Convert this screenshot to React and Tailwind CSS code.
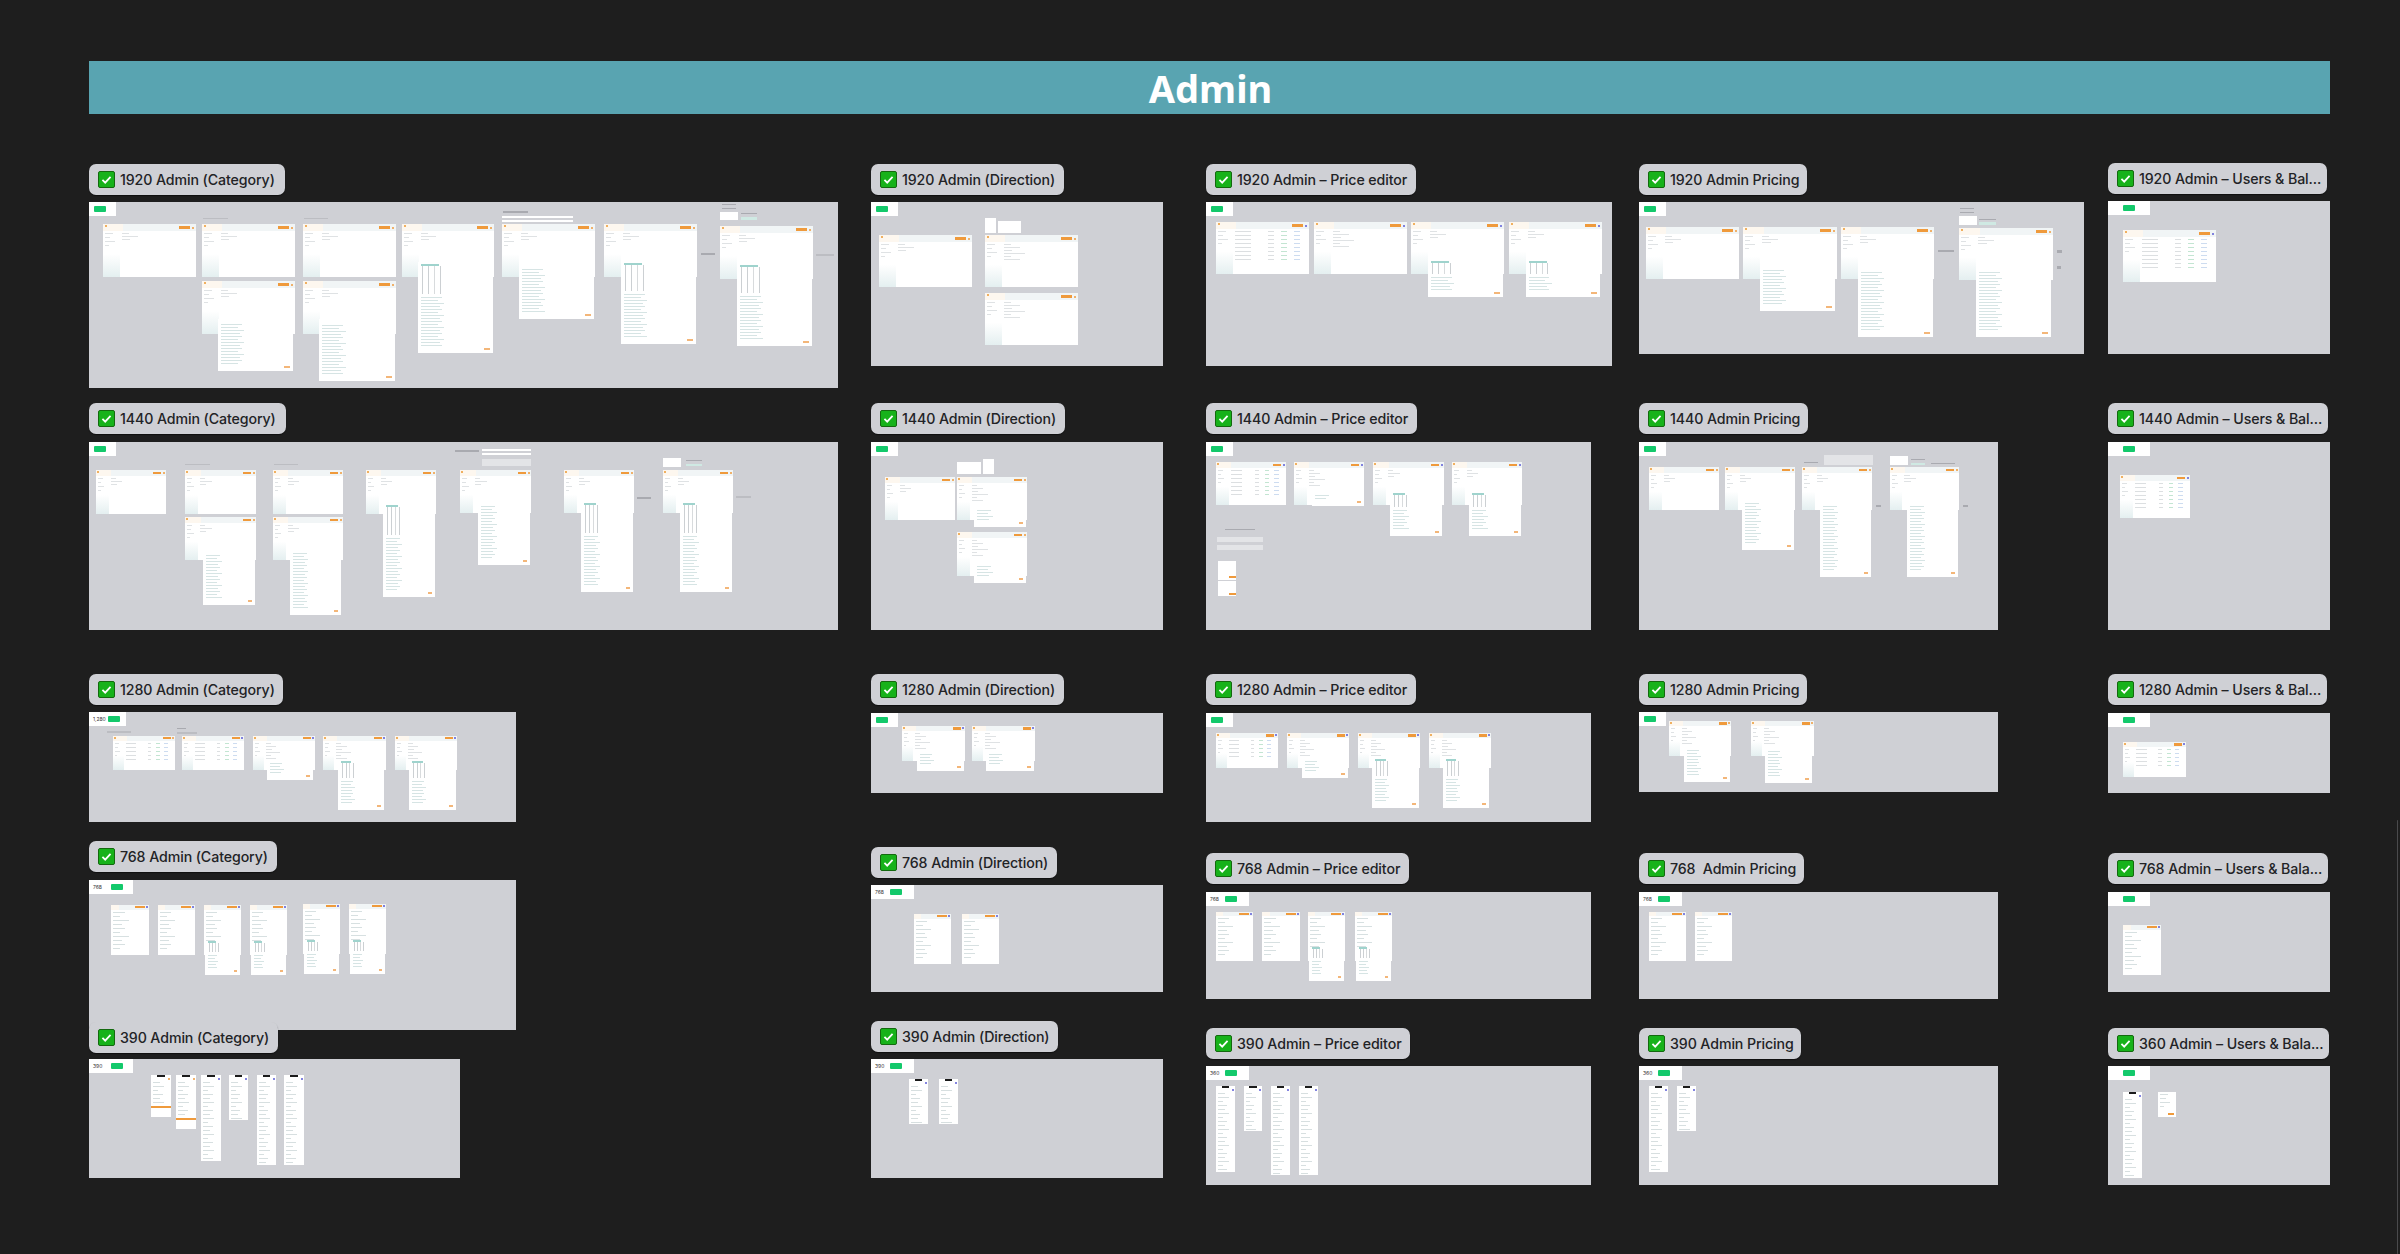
const DOT_BLUE = 'bg-[#5b5bd6]';
const DOT_ORANGE = 'bg-[#ef9a3c]';

// helper for a tall white continuation hanging below a desktop screen
const ext = (x, w, b, chart = false) => ({ x, w, b, chart });

const FRAMES = [
  // 1920 row
  {
    label: '1920 Admin (Category)', bx: 89, by: 164, bw: 196, x: 89, y: 202, w: 749, h: 186, tw: 27,
    screens: [
      { x: 103, y: 224, w: 93, h: 53 },
      { x: 202, y: 224, w: 93, h: 53 },
      { x: 202, y: 281, w: 93, h: 53, ext: ext(218, 75, 371) },
      { x: 303, y: 224, w: 93, h: 53 },
      { x: 303, y: 281, w: 93, h: 53, ext: ext(319, 76, 381) },
      { x: 402, y: 224, w: 92, h: 53, ext: ext(418, 75, 353, true) },
      { x: 502, y: 224, w: 93, h: 53, ext: ext(519, 75, 319) },
      { x: 604, y: 224, w: 93, h: 53, ext: ext(621, 75, 344, true) },
      { x: 720, y: 226, w: 93, h: 53, ext: ext(737, 75, 346, true) },
    ],
    notes: [
      [203, 218, 25, 1, 'gray'], [304, 218, 24, 1, 'gray'], [503, 211, 25, 2, 'dark'],
      [502, 216, 71, 2, 'white'], [502, 220, 71, 2, 'white'], [722, 204, 14, 1, 'dark'], [722, 208, 14, 1, 'dark'],
      [720, 212, 18, 8, 'white'], [741, 213, 16, 1, 'dark'], [741, 217, 16, 3, 'teal'],
      [701, 253, 14, 2, 'dark'], [816, 254, 18, 2, 'gray'],
    ],
  },
  {
    label: '1920 Admin (Direction)', bx: 871, by: 164, bw: 193, x: 871, y: 202, w: 292, h: 164, tw: 27,
    screens: [
      { x: 879, y: 235, w: 93, h: 52 },
      { x: 985, y: 235, w: 93, h: 52, kind: 'form' },
      { x: 985, y: 293, w: 93, h: 52, kind: 'form' },
    ],
    notes: [[985, 218, 11, 15, 'white'], [998, 221, 23, 12, 'white']],
  },
  {
    label: '1920 Admin – Price editor', bx: 1206, by: 164, bw: 210, x: 1206, y: 202, w: 406, h: 164, tw: 27,
    screens: [
      { x: 1216, y: 222, w: 93, h: 52, kind: 'table', dot: DOT_BLUE },
      { x: 1314, y: 222, w: 93, h: 52, kind: 'form', dot: DOT_BLUE },
      { x: 1411, y: 222, w: 93, h: 52, dot: DOT_BLUE, ext: ext(1428, 75, 297, true) },
      { x: 1509, y: 222, w: 93, h: 52, dot: DOT_BLUE, ext: ext(1526, 74, 297, true) },
    ],
  },
  {
    label: '1920 Admin Pricing', bx: 1639, by: 164, bw: 168, x: 1639, y: 202, w: 445, h: 152, tw: 27,
    screens: [
      { x: 1646, y: 227, w: 93, h: 52 },
      { x: 1743, y: 227, w: 94, h: 52, ext: ext(1760, 75, 311) },
      { x: 1841, y: 227, w: 93, h: 52, ext: ext(1858, 75, 337) },
      { x: 1959, y: 228, w: 94, h: 52, ext: ext(1976, 75, 337) },
    ],
    notes: [
      [1960, 208, 14, 1, 'dark'], [1960, 212, 14, 1, 'dark'], [1959, 216, 18, 9, 'white'], [1979, 219, 17, 1, 'dark'],
      [1979, 222, 17, 3, 'teal'], [1938, 250, 16, 2, 'dark'], [2057, 250, 5, 3, 'dark'], [2057, 266, 4, 3, 'dark'],
    ],
  },
  {
    label: '1920 Admin – Users & Bal...', bx: 2108, by: 163, bw: 219, x: 2108, y: 201, w: 222, h: 153, tw: 42, chipX: 15,
    screens: [{ x: 2123, y: 230, w: 93, h: 52, kind: 'table', dot: DOT_BLUE }],
  },

  // 1440 row
  {
    label: '1440 Admin (Category)', bx: 89, by: 403, bw: 197, x: 89, y: 442, w: 749, h: 188, tw: 27,
    screens: [
      { x: 96, y: 470, w: 70, h: 44 },
      { x: 185, y: 470, w: 71, h: 44 },
      { x: 185, y: 517, w: 71, h: 43, ext: ext(203, 52, 605) },
      { x: 273, y: 470, w: 70, h: 44 },
      { x: 273, y: 517, w: 70, h: 43, ext: ext(290, 51, 615) },
      { x: 366, y: 470, w: 70, h: 44, ext: ext(383, 52, 597, true) },
      { x: 460, y: 470, w: 71, h: 43, ext: ext(478, 52, 565) },
      { x: 564, y: 470, w: 70, h: 43, ext: ext(581, 52, 592, true) },
      { x: 663, y: 470, w: 70, h: 43, ext: ext(680, 52, 592, true) },
    ],
    notes: [
      [185, 464, 25, 1, 'gray'], [274, 464, 24, 1, 'gray'], [455, 450, 24, 2, 'dark'], [482, 449, 49, 2, 'white'],
      [482, 453, 49, 2, 'white'], [482, 459, 49, 7, 'lite'], [663, 458, 18, 9, 'white'], [686, 460, 16, 1, 'dark'],
      [686, 464, 16, 2, 'teal'], [637, 497, 14, 2, 'dark'], [736, 496, 15, 2, 'gray'],
    ],
  },
  {
    label: '1440 Admin (Direction)', bx: 871, by: 403, bw: 194, x: 871, y: 442, w: 292, h: 188, tw: 27,
    screens: [
      { x: 885, y: 477, w: 70, h: 43 },
      { x: 957, y: 477, w: 70, h: 43, kind: 'form', ext: ext(974, 52, 527) },
      { x: 957, y: 532, w: 70, h: 44, kind: 'form', ext: ext(974, 52, 583) },
    ],
    notes: [[957, 462, 24, 12, 'white'], [983, 459, 11, 15, 'white']],
  },
  {
    label: '1440 Admin – Price editor', bx: 1206, by: 403, bw: 211, x: 1206, y: 442, w: 385, h: 188, tw: 27,
    screens: [
      { x: 1216, y: 462, w: 70, h: 43, kind: 'table', dot: DOT_BLUE },
      { x: 1294, y: 462, w: 70, h: 43, kind: 'form', dot: DOT_BLUE, ext: ext(1312, 52, 506) },
      { x: 1373, y: 462, w: 71, h: 43, dot: DOT_BLUE, ext: ext(1390, 52, 536, true) },
      { x: 1452, y: 462, w: 70, h: 43, dot: DOT_BLUE, ext: ext(1469, 52, 536, true) },
    ],
    notes: [
      [1225, 529, 30, 1, 'dark'], [1217, 537, 46, 5, 'lite'], [1217, 545, 46, 5, 'lite'],
      [1218, 561, 18, 19, 'white'], [1218, 581, 18, 15, 'white'], [1229, 576, 7, 2, 'orange'], [1229, 593, 7, 2, 'orange'],
    ],
  },
  {
    label: '1440 Admin Pricing', bx: 1639, by: 403, bw: 169, x: 1639, y: 442, w: 359, h: 188, tw: 27,
    screens: [
      { x: 1649, y: 467, w: 70, h: 43 },
      { x: 1725, y: 467, w: 70, h: 43, ext: ext(1742, 52, 550) },
      { x: 1802, y: 467, w: 70, h: 43, ext: ext(1820, 51, 577) },
      { x: 1890, y: 467, w: 69, h: 43, ext: ext(1907, 51, 577) },
    ],
    notes: [
      [1824, 455, 49, 10, 'lite'], [1804, 462, 14, 1, 'dark'], [1890, 456, 18, 9, 'white'], [1911, 459, 14, 1, 'dark'],
      [1911, 463, 14, 2, 'teal'], [1931, 463, 24, 1, 'dark'], [1876, 505, 5, 2, 'dark'], [1963, 505, 5, 2, 'dark'],
    ],
  },
  {
    label: '1440 Admin – Users & Bal...', bx: 2108, by: 403, bw: 220, x: 2108, y: 442, w: 222, h: 188, tw: 42, chipX: 15,
    screens: [{ x: 2120, y: 475, w: 70, h: 43, kind: 'table', dot: DOT_BLUE }],
  },

  // 1280 row
  {
    label: '1280 Admin (Category)', bx: 89, by: 674, bw: 194, x: 89, y: 712, w: 427, h: 110, tw: 37, num: '1,280', chipX: 19,
    screens: [
      { x: 113, y: 736, w: 62, h: 34, kind: 'table' },
      { x: 182, y: 736, w: 62, h: 34, kind: 'table', dot: DOT_BLUE },
      { x: 253, y: 736, w: 62, h: 34, kind: 'form', dot: DOT_BLUE, ext: ext(267, 46, 780) },
      { x: 323, y: 736, w: 63, h: 34, kind: 'form', dot: DOT_BLUE, ext: ext(338, 46, 810, true) },
      { x: 395, y: 736, w: 62, h: 34, kind: 'form', dot: DOT_BLUE, ext: ext(409, 47, 810, true) },
    ],
    notes: [[107, 731, 24, 2, 'gray'], [177, 728, 9, 1, 'dark'], [177, 732, 20, 2, 'gray']],
  },
  {
    label: '1280 Admin (Direction)', bx: 871, by: 674, bw: 193, x: 871, y: 713, w: 292, h: 80, tw: 27,
    screens: [
      { x: 902, y: 726, w: 63, h: 35, kind: 'form', dot: DOT_BLUE, ext: ext(917, 47, 771) },
      { x: 972, y: 726, w: 63, h: 35, kind: 'form', dot: DOT_BLUE, ext: ext(986, 48, 771) },
    ],
  },
  {
    label: '1280 Admin – Price editor', bx: 1206, by: 674, bw: 210, x: 1206, y: 713, w: 385, h: 109, tw: 27,
    screens: [
      { x: 1216, y: 733, w: 62, h: 35, kind: 'table', dot: DOT_BLUE },
      { x: 1287, y: 733, w: 62, h: 35, kind: 'form', dot: DOT_BLUE, ext: ext(1302, 46, 778) },
      { x: 1358, y: 733, w: 62, h: 35, kind: 'form', dot: DOT_BLUE, ext: ext(1372, 47, 808, true) },
      { x: 1429, y: 733, w: 62, h: 35, kind: 'form', dot: DOT_BLUE, ext: ext(1443, 46, 808, true) },
    ],
  },
  {
    label: '1280 Admin Pricing', bx: 1639, by: 674, bw: 168, x: 1639, y: 712, w: 359, h: 80, tw: 27,
    screens: [
      { x: 1669, y: 721, w: 62, h: 35, kind: 'form', ext: ext(1684, 46, 782) },
      { x: 1751, y: 721, w: 63, h: 35, kind: 'form', ext: ext(1765, 47, 783) },
    ],
  },
  {
    label: '1280 Admin – Users & Bal...', bx: 2108, by: 674, bw: 219, x: 2108, y: 713, w: 222, h: 80, tw: 42, chipX: 15,
    screens: [{ x: 2123, y: 742, w: 63, h: 35, kind: 'table', dot: DOT_BLUE }],
  },

  // 768 row
  {
    label: '768 Admin (Category)', bx: 89, by: 841, bw: 188, x: 89, y: 880, w: 427, h: 150, tw: 44, num: '768', chipX: 22,
    screens: [
      { x: 111, y: 905, w: 38, h: 50, kind: 'tablet' },
      { x: 158, y: 905, w: 37, h: 50, kind: 'tablet' },
      { x: 204, y: 905, w: 37, h: 50, kind: 'tablet', ext: ext(205, 35, 975, true) },
      { x: 250, y: 905, w: 37, h: 50, kind: 'tablet', ext: ext(251, 35, 975, true) },
      { x: 303, y: 904, w: 37, h: 50, kind: 'tablet', ext: ext(304, 35, 974, true) },
      { x: 349, y: 904, w: 37, h: 50, kind: 'tablet', ext: ext(350, 35, 974, true) },
    ],
  },
  {
    label: '768 Admin (Direction)', bx: 871, by: 847, bw: 186, x: 871, y: 885, w: 292, h: 107, tw: 43, num: '768', chipX: 19,
    screens: [
      { x: 914, y: 914, w: 37, h: 50, kind: 'tablet' },
      { x: 962, y: 914, w: 37, h: 50, kind: 'tablet' },
    ],
  },
  {
    label: '768 Admin – Price editor', bx: 1206, by: 853, bw: 203, x: 1206, y: 892, w: 385, h: 107, tw: 43, num: '768', chipX: 19,
    screens: [
      { x: 1216, y: 912, w: 37, h: 49, kind: 'tablet' },
      { x: 1262, y: 912, w: 38, h: 49, kind: 'tablet' },
      { x: 1308, y: 912, w: 37, h: 49, kind: 'tablet', ext: ext(1309, 35, 981, true) },
      { x: 1355, y: 912, w: 37, h: 49, kind: 'tablet', ext: ext(1356, 35, 981, true) },
    ],
  },
  {
    label: '768  Admin Pricing', bx: 1639, by: 853, bw: 165, x: 1639, y: 892, w: 359, h: 107, tw: 43, num: '768', chipX: 19,
    screens: [
      { x: 1649, y: 912, w: 37, h: 49, kind: 'tablet' },
      { x: 1695, y: 912, w: 37, h: 49, kind: 'tablet' },
    ],
  },
  {
    label: '768 Admin – Users & Bala...', bx: 2108, by: 853, bw: 220, x: 2108, y: 892, w: 222, h: 100, tw: 42, chipX: 15,
    screens: [{ x: 2123, y: 925, w: 38, h: 50, kind: 'tablet' }],
  },

  // 390 row
  {
    label: '390 Admin (Category)', bx: 89, by: 1022, bw: 189, x: 89, y: 1059, w: 371, h: 119, tw: 44, num: '390', chipX: 22,
    screens: [
      { x: 151, y: 1075, w: 20, h: 42, kind: 'phone', bar: true },
      { x: 176, y: 1075, w: 20, h: 54, kind: 'phone', bar: true },
      { x: 201, y: 1075, w: 20, h: 86, kind: 'phone' },
      { x: 229, y: 1075, w: 19, h: 45, kind: 'phone' },
      { x: 257, y: 1075, w: 19, h: 90, kind: 'phone' },
      { x: 284, y: 1075, w: 20, h: 90, kind: 'phone' },
    ],
  },
  {
    label: '390 Admin (Direction)', bx: 871, by: 1021, bw: 187, x: 871, y: 1059, w: 292, h: 119, tw: 43, num: '390', chipX: 19,
    screens: [
      { x: 909, y: 1079, w: 19, h: 45, kind: 'phone' },
      { x: 939, y: 1079, w: 19, h: 45, kind: 'phone' },
    ],
  },
  {
    label: '390 Admin – Price editor', bx: 1206, by: 1028, bw: 204, x: 1206, y: 1066, w: 385, h: 119, tw: 43, num: '360', chipX: 19,
    screens: [
      { x: 1216, y: 1086, w: 19, h: 86, kind: 'phone' },
      { x: 1244, y: 1086, w: 18, h: 45, kind: 'phone' },
      { x: 1271, y: 1086, w: 19, h: 89, kind: 'phone' },
      { x: 1299, y: 1086, w: 19, h: 89, kind: 'phone' },
    ],
  },
  {
    label: '390 Admin Pricing', bx: 1639, by: 1028, bw: 162, x: 1639, y: 1066, w: 359, h: 119, tw: 43, num: '360', chipX: 19,
    screens: [
      { x: 1649, y: 1086, w: 19, h: 86, kind: 'phone' },
      { x: 1677, y: 1086, w: 19, h: 45, kind: 'phone' },
    ],
  },
  {
    label: '360 Admin – Users & Bala...', bx: 2108, by: 1028, bw: 221, x: 2108, y: 1066, w: 222, h: 119, tw: 42, chipX: 15,
    screens: [
      { x: 2123, y: 1092, w: 19, h: 86, kind: 'phone' },
      { x: 2158, y: 1092, w: 18, h: 25, kind: 'popup' },
    ],
  },
];

const NOTE_COLORS = {
  gray: 'bg-[#bcbdc2]',
  dark: 'bg-[#a9aab0]',
  white: 'bg-white',
  lite: 'bg-[#e3e4e7]',
  teal: 'bg-[#cfe9e3]',
  orange: 'bg-[#ef9a3c]',
};

const box = (x, y, w, h) => ({ left: x, top: y, width: w, height: h });

// a few tiny grey dashes that stand in for unreadable text
function Dashes({ count, gap = 2, widths = [60, 40, 75, 30], color = 'bg-[#dfe2e4]' }) {
  return (
    <div className="flex flex-col" style={{ gap }}>
      {Array.from({ length: count }, (_, i) => (
        <div key={i} className={`h-px ${color}`} style={{ width: `${widths[i % widths.length]}%` }} />
      ))}
    </div>
  );
}

function TableRows({ rows }) {
  return (
    <div className="flex flex-col gap-[3px]">
      {Array.from({ length: rows }, (_, i) => (
        <div key={i} className="flex gap-[10%]">
          <div className="h-px w-[22%] bg-[#dcdfe1]" />
          <div className="ml-[14%] h-px w-[8%] bg-[#dcdfe1]" />
          <div className="h-px w-[8%] bg-[#c3e5d2]" />
          <div className="h-px w-[8%] bg-[#cddcf0]" />
        </div>
      ))}
    </div>
  );
}

function Extension({ screen }) {
  const { x, y, w, h, ext: e } = screen;
  const top = y + h * 0.72;
  const height = e.b - top;
  const chartH = e.chart ? Math.min(height * 0.34, 30) : 0;
  const rows = Math.max(Math.floor((height - chartH - 6) / 3.2), 1);
  return (
    <div
      className="absolute flex flex-col justify-end gap-[1px] bg-white px-[3px] pb-[3px]"
      style={{ left: e.x - x, top: h * 0.72, width: e.w, height }}
    >
      {e.chart && (
        <div className="mb-[2px] flex flex-col" style={{ height: chartH }}>
          <div className="h-[2px] w-[26%] bg-[#9fd3cd]" />
          <div className="flex flex-1 gap-[7%] pl-[2%]">
            <div className="w-px bg-[#ccd0d3]" />
            <div className="w-px bg-[#ccd0d3]" />
            <div className="w-px bg-[#d8dbdd]" />
            <div className="w-px bg-[#ccd0d3]" />
          </div>
        </div>
      )}
      <Dashes count={rows} widths={[30, 24, 34, 27]} color="bg-[#d6e4e4]" />
      <div className="mt-[1px] flex justify-end">
        <div className="h-[2px] w-[9%] bg-[#f3b679]" />
      </div>
    </div>
  );
}

function DesktopScreen({ screen }) {
  const { kind, dot = DOT_ORANGE } = screen;
  return (
    <div className="flex h-full w-full flex-col">
      <div className="flex h-[14%] items-center bg-[#f1f5f6]">
        <div className="h-full w-[22%] bg-[#fdf7ef] pl-[2%] pt-[1%]">
          <div className="h-[2px] w-[2px] bg-[#f0b060]" />
        </div>
        <div className="flex-1" />
        <div className="h-[45%] w-[12%] bg-[#ef9a3c]" />
        <div className={`mx-[2%] h-[2px] w-[2px] rounded-full ${dot}`} />
      </div>
      <div className="flex min-h-0 flex-1">
        <div className="w-[18%] bg-gradient-to-b from-white from-50% to-[#e4eff0] p-[2px]">
          <Dashes count={4} gap={3} />
        </div>
        <div className="flex-1 p-[2px]">
          {kind === 'table' ? <TableRows rows={Math.floor(screen.h / 6)} /> : <Dashes count={kind === 'form' ? 6 : 3} widths={[10, 22, 12, 30]} />}
        </div>
      </div>
    </div>
  );
}

function TabletScreen() {
  return (
    <div className="flex h-full w-full flex-col">
      <div className="flex h-[9%] items-center bg-[#f1f5f6]">
        <div className="h-full w-[20%] bg-[#fdf7ef]" />
        <div className="flex-1" />
        <div className="h-[55%] w-[26%] bg-[#ef9a3c]" />
        <div className={`mx-[3%] h-[2px] w-[2px] rounded-full ${DOT_BLUE}`} />
      </div>
      <div className="flex-1 p-[2px]">
        <Dashes count={10} gap={3} widths={[34, 20, 46, 26]} color="bg-[#d7e0e1]" />
      </div>
    </div>
  );
}

function PhoneScreen({ screen }) {
  return (
    <div className="flex h-full w-full flex-col">
      <div className="mx-auto h-[2px] w-[40%] bg-[#1b1b1b]" />
      <div className="flex justify-end pr-[1px] pt-[1px]">
        <div className={`h-[2px] w-[2px] rounded-full ${screen.bar ? DOT_ORANGE : DOT_BLUE}`} />
      </div>
      <div className="flex-1 overflow-hidden p-[2px]">
        <Dashes count={Math.floor(screen.h / (screen.bar ? 5 : 4))} gap={3} widths={[45, 70, 30, 60]} color="bg-[#d7dfe0]" />
      </div>
      {screen.bar && <div className="mb-[9px] h-[2px] w-full bg-[#ef9a3c]" />}
    </div>
  );
}

function PopupScreen() {
  return (
    <div className="flex h-full w-full flex-col justify-between p-[2px]">
      <Dashes count={4} gap={3} widths={[60, 40, 70, 30]} color="bg-[#d7dfe0]" />
      <div className="ml-auto h-[2px] w-[45%] bg-[#ef9a3c]" />
    </div>
  );
}

function Screen({ screen }) {
  const { x, y, w, h, kind, ext: e } = screen;
  return (
    <div className="absolute bg-white blur-[0.4px]" style={box(x, y, w, h)}>
      {kind === 'tablet' ? <TabletScreen /> : kind === 'phone' ? <PhoneScreen screen={screen} /> : kind === 'popup' ? <PopupScreen /> : <DesktopScreen screen={screen} />}
      {e && <Extension screen={screen} />}
    </div>
  );
}

function CheckMark() {
  return (
    <span className="flex h-[17px] w-[17px] shrink-0 items-center justify-center rounded-[2px] border border-[#14690f] bg-[#17b21a]">
      <svg viewBox="0 0 16 16" className="h-[13px] w-[13px]" fill="none" stroke="#fff" strokeWidth="2.2">
        <path d="M3 8.5l3.4 3.4L13 4.8" />
      </svg>
    </span>
  );
}

function SectionLabel({ frame }) {
  return (
    <div
      className="absolute flex h-[31px] items-center gap-[5px] whitespace-pre rounded-[7px] bg-[#cfd0d5] pl-[9px] font-['Inter',sans-serif] text-[14.2px] font-medium tracking-[-0.1px] text-[#222326] shadow-[0_1px_1px_rgba(0,0,0,0.5)]"
      style={{ left: frame.bx, top: frame.by, width: frame.bw }}
    >
      <CheckMark />
      <span>{frame.label}</span>
    </div>
  );
}

function Frame({ frame }) {
  return (
    <>
      <div className="absolute bg-[#cfd0d5]" style={box(frame.x, frame.y, frame.w, frame.h)} />
      <div className="absolute bg-white" style={box(frame.x, frame.y, frame.tw, 14)}>
        {frame.num && (
          <span className="absolute left-[4px] top-[4px] font-['Inter',sans-serif] text-[5px] leading-[6px] text-[#333]">{frame.num}</span>
        )}
        <div className="absolute top-[4px] h-[6px] w-[12px] rounded-[1px] bg-[#13c96b]" style={{ left: frame.chipX ?? 5 }} />
      </div>
      {frame.notes?.map(([x, y, w, h, c], i) => (
        <div key={i} className={`absolute blur-[0.4px] ${NOTE_COLORS[c]}`} style={box(x, y, w, h)} />
      ))}
      {frame.screens.map((s, i) => (
        <Screen key={i} screen={s} />
      ))}
    </>
  );
}

export default function App() {
  return (
    <div className="relative h-[1254px] w-[2400px] overflow-hidden bg-[#1e1e1e] pt-[61px]">
      <header className="ml-[89px] flex h-[53px] w-[2241px] items-center justify-center bg-[#59a4b1] font-['Noto_Sans',sans-serif] text-[38px] font-bold leading-none text-white">
        <h1 className="pl-[2px]">Admin</h1>
      </header>
      {FRAMES.map((f) => (
        <Frame key={f.label} frame={f} />
      ))}
      {FRAMES.map((f) => (
        <SectionLabel key={f.label} frame={f} />
      ))}
      <div className="absolute left-[2397px] top-[820px] h-[434px] w-px rounded-full bg-[#4a4a4c]" />
    </div>
  );
}
